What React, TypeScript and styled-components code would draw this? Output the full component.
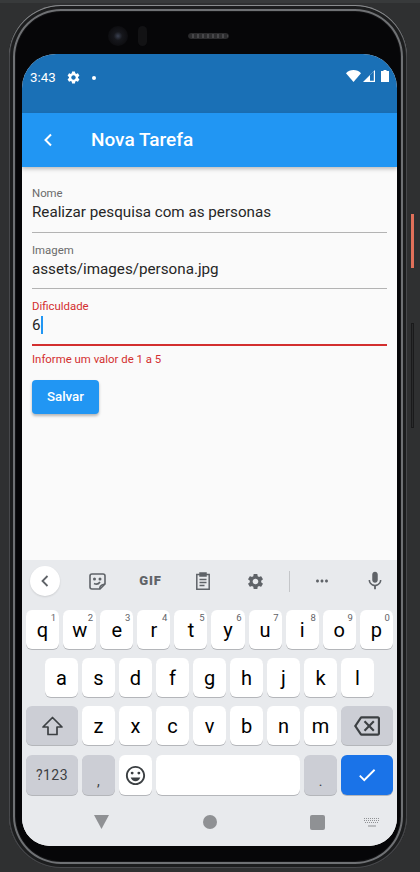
import React from "react";
import styled, { createGlobalStyle } from "styled-components";
import { MdSettings, MdMic, MdMoreHoriz, MdCheck, MdOutlineBackspace, MdOutlineEmojiEmotions } from "react-icons/md";

const Global = createGlobalStyle`
  html, body { margin: 0; padding: 0; background: #2f3031; }
  body { width: 420px; height: 872px; overflow: hidden; font-family: Roboto, "Liberation Sans", sans-serif; }
  * { box-sizing: border-box; }
`;

const Page = styled.div`
  width: 420px;
  height: 872px;
  padding: 2px 13px 0 9px;
  background: #2f3031;
  border-top: 3px solid #383a3b;
`;
const Phone = styled.div`
  position: relative;
  width: 398px;
  height: 863px;
  padding: 0 10px 22px 13px;
  background: #060608;
  border-radius: 52px;
  box-shadow: inset 0 1px 0 #8a8c8e, inset 0 0 0 1px #48494c, inset 0 0 0 4px #1c1d1e, inset 0 0 0 6px #6f7174, inset 0 0 0 7px #141416;
`;
const SideButton = styled.div<{ $top: number; $height: number; $accent?: boolean }>`
  position: absolute;
  left: 402px;
  top: ${(p) => p.$top}px;
  width: 3px;
  height: ${(p) => p.$height}px;
  background: ${(p) => (p.$accent ? "#e0705a" : "#2a2b2c")};
  box-shadow: ${(p) => (p.$accent ? "none" : "inset 0 0 0 1px #1a1a1b")};
`;
const Sensors = styled.div`
  height: 49px;
  display: flex;
  align-items: center;
  padding: 13px 0 0 86px;
`;
const Camera = styled.div`
  width: 20px;
  height: 20px;
  border-radius: 50%;
  background: radial-gradient(circle at 50% 50%, #3a4050 0, #16171c 30%, #0d0d10 70%, #141416 100%);
`;
const Sensor = styled.div`
  width: 9px;
  height: 20px;
  margin-left: 10px;
  border-radius: 5px;
  background: #121214;
`;
const Speaker = styled.div`
  width: 41px;
  height: 6px;
  margin-left: 41px;
  border-radius: 3px;
  background: repeating-linear-gradient(90deg, #2c2c2e 0 3px, #47474a 3px 5px);
  border: 1px solid #2b2b2d;
`;
const Screen = styled.div`
  width: 375px;
  height: 792px;
  border-radius: 34px 34px 28px 28px;
  overflow: hidden;
  display: flex;
  flex-direction: column;
  background: #fafafa;
`;
const StatusBar = styled.div`
  height: 59px;
  flex: none;
  background: #1a70b6;
  color: #fff;
  display: flex;
  align-items: flex-start;
  padding: 16px 8px 0 8px;
`;
const Time = styled.span`
  font-size: 13.3px;
  line-height: 16px;
  width: 36px;
`;
const Dot = styled.span`
  width: 4px;
  height: 4px;
  margin: 6px 0 0 11px;
  border-radius: 50%;
  background: #fff;
`;
const Spacer = styled.div`
  flex: 1;
`;
const StatusIcon = styled.svg<{ $gap?: number }>`
  display: block;
  margin-left: ${(p) => p.$gap ?? 2}px;
`;
const AppBar = styled.header`
  position: relative;
  z-index: 1;
  height: 54px;
  flex: none;
  background: #2196f3;
  color: #fff;
  display: flex;
  align-items: center;
  padding-left: 21px;
  box-shadow: 0 2px 4px rgba(0, 0, 0, 0.25);
`;
const Title = styled.h1`
  margin: 0 0 0 38px;
  font-size: 19px;
  line-height: 24px;
  font-weight: 500;
`;
const Form = styled.main`
  flex: 1;
  padding: 9px 10px 0 10px;
  background: #fafafa;
`;
const Field = styled.div<{ $error?: boolean }>`
  height: 56.5px;
  padding-top: 10px;
  border-bottom: ${(p) => (p.$error ? "2px solid #d32f2f" : "1px solid #b3b3b3")};
`;
const Label = styled.div<{ $error?: boolean }>`
  font-size: 11.4px;
  line-height: 14px;
  color: ${(p) => (p.$error ? "#d32f2f" : "#6b6b6b")};
`;
const Value = styled.div`
  display: flex;
  font-size: 15.2px;
  line-height: 24px;
  color: #262626;
`;
const Caret = styled.span`
  width: 2px;
  height: 18px;
  margin: 3px 0 0 0;
  background: #2196f3;
`;
const ErrorText = styled.div`
  margin-top: 6px;
  font-size: 11.4px;
  line-height: 14px;
  color: #d32f2f;
`;
const SaveButton = styled.button`
  display: block;
  width: 67px;
  height: 34px;
  margin-top: 14px;
  padding: 0;
  border: 0;
  border-radius: 4px;
  background: #2196f3;
  color: #fff;
  font-family: inherit;
  font-size: 13.3px;
  font-weight: 500;
  box-shadow: 0 2px 3px rgba(0, 0, 0, 0.28);
`;
const Keyboard = styled.section`
  height: 286px;
  flex: none;
  background: #e8eaed;
  padding: 0 4px;
`;
const Toolbar = styled.div`
  height: 50px;
  padding: 6px 0 0 4px;
  display: grid;
  grid-template-columns: 30px 11px 53px 53px 52px 53px 14px 52px 8px 38px;
  color: #5f6368;
`;
const ToolCell = styled.div`
  display: flex;
  align-items: center;
  justify-content: center;
  height: 30px;
`;
const BackCircle = styled.div`
  width: 30px;
  height: 30px;
  border-radius: 50%;
  background: #fff;
  display: flex;
  align-items: center;
  justify-content: center;
  box-shadow: 0 1px 2px rgba(0, 0, 0, 0.12);
`;
const Gif = styled.span`
  font-size: 13px;
  line-height: 14px;
  font-weight: 900;
  letter-spacing: 0.8px;
`;
const Divider = styled.div`
  width: 1px;
  height: 21px;
  background: #c4c6c9;
`;
const Rows = styled.div`
  display: flex;
  flex-direction: column;
`;
const KeyRow = styled.div<{ $inset?: number; $h?: number; $mb?: number }>`
  height: ${(p) => p.$h ?? 39}px;
  margin-bottom: ${(p) => p.$mb ?? 9}px;
  padding: 0 ${(p) => p.$inset ?? 0}px;
  display: flex;
  gap: 4px;
`;
const Key = styled.div<{ $w?: number; $kind?: "light" | "dark" | "blue" }>`
  position: relative;
  flex: ${(p) => (p.$w ? `0 0 ${p.$w}px` : "1 1 0")};
  display: flex;
  align-items: center;
  justify-content: center;
  border-radius: 6px;
  background: ${(p) => (p.$kind === "dark" ? "#ccced5" : p.$kind === "blue" ? "#1a73e8" : "#fff")};
  color: ${(p) => (p.$kind === "dark" ? "#3c4043" : p.$kind === "blue" ? "#fff" : "#000")};
  box-shadow: 0 1px 0 #b4b6ba;
  font-size: 20px;
  line-height: 24px;
`;
const Hint = styled.sup`
  position: absolute;
  top: 3px;
  right: 3px;
  font-size: 9.5px;
  line-height: 10px;
  color: #5f6368;
`;
const SymbolLabel = styled.span`
  font-size: 14px;
  letter-spacing: 0.4px;
`;
const Punct = styled.span`
  font-size: 14px;
  line-height: 14px;
  margin-top: 12px;
`;
const NavBar = styled.nav`
  height: 51px;
  display: grid;
  grid-template-columns: 68px 15px 93px 15px 93px 15px 39px 16px;
  align-items: center;
  padding-top: 3px;
  color: #8f9194;
`;
const NavCell = styled.div`
  display: flex;
  justify-content: center;
`;
const NavCircle = styled.div`
  width: 14px;
  height: 14px;
  border-radius: 50%;
  background: #8f9194;
`;
const NavSquare = styled.div`
  width: 15px;
  height: 15px;
  border-radius: 2px;
  background: #8f9194;
`;

const row1: [string, string][] = [["q","1"],["w","2"],["e","3"],["r","4"],["t","5"],["y","6"],["u","7"],["i","8"],["o","9"],["p","0"]];
const row2 = ["a","s","d","f","g","h","j","k","l"];
const row3 = ["z","x","c","v","b","n","m"];

export default function App() {
  return (
    <Page>
      <Global />
      <Phone>
        <SideButton $top={209} $height={54} $accent />
        <SideButton $top={318} $height={105} />
        <Sensors>
          <Camera />
          <Sensor />
          <Speaker />
        </Sensors>
        <Screen>
          <StatusBar>
            <Time>3:43</Time>
            <MdSettings size={15} color="#fff" />
            <Dot />
            <Spacer />
            <StatusIcon width="15" height="12" viewBox="0 0 15 12"><path d="M0 3.2C2 1.2 4.6 0 7.5 0s5.5 1.2 7.5 3.2L7.5 12z" fill="#fff" /></StatusIcon>
            <StatusIcon width="12" height="12" viewBox="0 0 12 12"><path d="M0 12L12 0v12z" fill="#fff" /><path d="M7 10.8V5l3.8-3.8v9.6z" fill="#1a70b6" /></StatusIcon>
            <StatusIcon $gap={6} width="8" height="12" viewBox="0 0 8 12"><path d="M2.5 0h3v1H8v11H0V1h2.5z" fill="#fff" /></StatusIcon>
          </StatusBar>
          <AppBar>
            <svg width="10" height="14" viewBox="0 0 10 14"><path d="M8 1.5L2.5 7 8 12.5" fill="none" stroke="#fff" strokeWidth="2" /></svg>
            <Title>Nova Tarefa</Title>
          </AppBar>
          <Form>
            <Field>
              <Label>Nome</Label>
              <Value>Realizar pesquisa com as personas</Value>
            </Field>
            <Field>
              <Label>Imagem</Label>
              <Value>assets/images/persona.jpg</Value>
            </Field>
            <Field $error>
              <Label $error>Dificuldade</Label>
              <Value>6<Caret /></Value>
            </Field>
            <ErrorText>Informe um valor de 1 a 5</ErrorText>
            <SaveButton>Salvar</SaveButton>
          </Form>
          <Keyboard>
            <Toolbar>
              <BackCircle>
                <svg width="10" height="12" viewBox="0 0 10 12"><path d="M7.5 1L2.5 6l5 5" fill="none" stroke="#5f6368" strokeWidth="1.8" /></svg>
              </BackCircle>
              <div />
              <ToolCell>
                <svg width="17" height="17" viewBox="0 0 17 17" fill="none" stroke="#5f6368" strokeWidth="1.6"><path d="M3 1h11a2 2 0 0 1 2 2v8l-5 5H3a2 2 0 0 1-2-2V3a2 2 0 0 1 2-2z" /><path d="M11 16c-.5-2 0-4 5-5" /><path d="M5 10.5c2 1 4.5.7 6-1.5" /><circle cx="5.5" cy="6" r=".7" fill="#5f6368" /><circle cx="11" cy="6" r=".7" fill="#5f6368" /></svg>
              </ToolCell>
              <ToolCell><Gif>GIF</Gif></ToolCell>
              <ToolCell>
                <svg width="16" height="18" viewBox="0 0 16 18" fill="none" stroke="#5f6368" strokeWidth="1.5"><path d="M5 2.5H1.8v14.700h12.400V2.5H11" /><path d="M5 1h6v3H5z" fill="#5f6368" /><path d="M4.5 7.5h7M4.5 10.5h7M4.5 13.5h5" /></svg>
              </ToolCell>
              <ToolCell><MdSettings size={19} /></ToolCell>
              <ToolCell><Divider /></ToolCell>
              <ToolCell><MdMoreHoriz size={18} /></ToolCell>
              <div />
              <ToolCell><MdMic size={22} /></ToolCell>
            </Toolbar>
            <Rows>
              <KeyRow>
                {row1.map(([k, n]) => (
                  <Key key={k}>{k}<Hint>{n}</Hint></Key>
                ))}
              </KeyRow>
              <KeyRow $inset={19}>
                {row2.map((k) => <Key key={k}>{k}</Key>)}
              </KeyRow>
              <KeyRow $mb={10}>
                <Key $w={52} $kind="dark">
                  <svg width="21" height="20" viewBox="0 0 21 20"><path d="M10.5 1.5L20 11h-5v7.500H6V11H1z" fill="none" stroke="#3c4043" strokeWidth="1.7" strokeLinejoin="round" /></svg>
                </Key>
                {row3.map((k) => <Key key={k}>{k}</Key>)}
                <Key $w={52} $kind="dark"><MdOutlineBackspace size={26} /></Key>
              </KeyRow>
              <KeyRow $h={40} $mb={0}>
                <Key $w={52} $kind="dark"><SymbolLabel>?123</SymbolLabel></Key>
                <Key $w={33} $kind="dark"><Punct>,</Punct></Key>
                <Key $w={33}><MdOutlineEmojiEmotions size={23} color="#3c4043" /></Key>
                <Key />
                <Key $w={33} $kind="dark"><Punct>.</Punct></Key>
                <Key $w={52} $kind="blue"><MdCheck size={22} /></Key>
              </KeyRow>
            </Rows>
            <NavBar>
              <div />
              <NavCell>
                <svg width="15" height="14" viewBox="0 0 15 14"><path d="M0 0h15L7.5 14z" fill="#8f9194" /></svg>
              </NavCell>
              <div />
              <NavCell><NavCircle /></NavCell>
              <div />
              <NavCell><NavSquare /></NavCell>
              <div />
              <NavCell>
                <svg width="16" height="10" viewBox="0 0 16 10" fill="none" stroke="#8f9194" strokeWidth="1" strokeDasharray="1 1"><path d="M0 1.5h16M0 3.5h16M1 5.5h14" /><path d="M4 9h8" strokeDasharray="none" /></svg>
              </NavCell>
            </NavBar>
          </Keyboard>
        </Screen>
      </Phone>
    </Page>
  );
}
